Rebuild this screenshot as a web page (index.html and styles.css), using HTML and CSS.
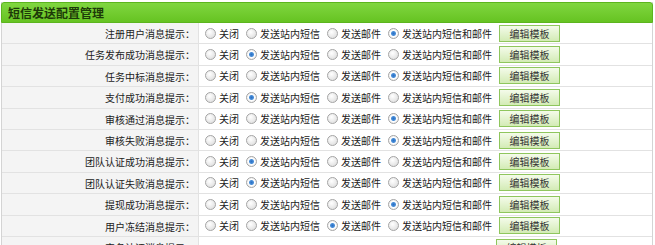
FILE: index.html
```html
<!DOCTYPE html>
<html lang="zh-CN">
  <head>
    <meta charset="UTF-8" />
    <title>短信发送配置管理</title>
    <link rel="stylesheet" href="styles.css">
  </head>
  <body>
    <div class="panel">
      <div class="panel-title">短信发送配置管理</div>

      <div class="row">
        <div class="label">注册用户消息提示：</div>
        <div class="field">
          <label class="opt"><input type="radio" name="r1"> 关闭</label>
          <label class="opt"><input type="radio" name="r1"> 发送站内短信</label>
          <label class="opt"><input type="radio" name="r1"> 发送邮件</label>
          <label class="opt"><input type="radio" name="r1" checked> 发送站内短信和邮件</label>
          <button class="edit-button">编辑模板</button>
        </div>
      </div>
      <div class="row">
        <div class="label">任务发布成功消息提示：</div>
        <div class="field">
          <label class="opt"><input type="radio" name="r2"> 关闭</label>
          <label class="opt"><input type="radio" name="r2" checked> 发送站内短信</label>
          <label class="opt"><input type="radio" name="r2"> 发送邮件</label>
          <label class="opt"><input type="radio" name="r2"> 发送站内短信和邮件</label>
          <button class="edit-button">编辑模板</button>
        </div>
      </div>
      <div class="row">
        <div class="label">任务中标消息提示：</div>
        <div class="field">
          <label class="opt"><input type="radio" name="r3"> 关闭</label>
          <label class="opt"><input type="radio" name="r3"> 发送站内短信</label>
          <label class="opt"><input type="radio" name="r3"> 发送邮件</label>
          <label class="opt"><input type="radio" name="r3" checked> 发送站内短信和邮件</label>
          <button class="edit-button">编辑模板</button>
        </div>
      </div>
      <div class="row">
        <div class="label">支付成功消息提示：</div>
        <div class="field">
          <label class="opt"><input type="radio" name="r4"> 关闭</label>
          <label class="opt"><input type="radio" name="r4" checked> 发送站内短信</label>
          <label class="opt"><input type="radio" name="r4"> 发送邮件</label>
          <label class="opt"><input type="radio" name="r4"> 发送站内短信和邮件</label>
          <button class="edit-button">编辑模板</button>
        </div>
      </div>
      <div class="row">
        <div class="label">审核通过消息提示：</div>
        <div class="field">
          <label class="opt"><input type="radio" name="r5"> 关闭</label>
          <label class="opt"><input type="radio" name="r5"> 发送站内短信</label>
          <label class="opt"><input type="radio" name="r5"> 发送邮件</label>
          <label class="opt"><input type="radio" name="r5" checked> 发送站内短信和邮件</label>
          <button class="edit-button">编辑模板</button>
        </div>
      </div>
      <div class="row">
        <div class="label">审核失败消息提示：</div>
        <div class="field">
          <label class="opt"><input type="radio" name="r6"> 关闭</label>
          <label class="opt"><input type="radio" name="r6"> 发送站内短信</label>
          <label class="opt"><input type="radio" name="r6"> 发送邮件</label>
          <label class="opt"><input type="radio" name="r6" checked> 发送站内短信和邮件</label>
          <button class="edit-button">编辑模板</button>
        </div>
      </div>
      <div class="row">
        <div class="label">团队认证成功消息提示：</div>
        <div class="field">
          <label class="opt"><input type="radio" name="r7"> 关闭</label>
          <label class="opt"><input type="radio" name="r7" checked> 发送站内短信</label>
          <label class="opt"><input type="radio" name="r7"> 发送邮件</label>
          <label class="opt"><input type="radio" name="r7"> 发送站内短信和邮件</label>
          <button class="edit-button">编辑模板</button>
        </div>
      </div>
      <div class="row">
        <div class="label">团队认证失败消息提示：</div>
        <div class="field">
          <label class="opt"><input type="radio" name="r8"> 关闭</label>
          <label class="opt"><input type="radio" name="r8" checked> 发送站内短信</label>
          <label class="opt"><input type="radio" name="r8"> 发送邮件</label>
          <label class="opt"><input type="radio" name="r8"> 发送站内短信和邮件</label>
          <button class="edit-button">编辑模板</button>
        </div>
      </div>
      <div class="row">
        <div class="label">提现成功消息提示：</div>
        <div class="field">
          <label class="opt"><input type="radio" name="r9"> 关闭</label>
          <label class="opt"><input type="radio" name="r9"> 发送站内短信</label>
          <label class="opt"><input type="radio" name="r9"> 发送邮件</label>
          <label class="opt"><input type="radio" name="r9" checked> 发送站内短信和邮件</label>
          <button class="edit-button">编辑模板</button>
        </div>
      </div>
      <div class="row">
        <div class="label">用户冻结消息提示：</div>
        <div class="field">
          <label class="opt"><input type="radio" name="r10"> 关闭</label>
          <label class="opt"><input type="radio" name="r10"> 发送站内短信</label>
          <label class="opt"><input type="radio" name="r10" checked> 发送邮件</label>
          <label class="opt"><input type="radio" name="r10"> 发送站内短信和邮件</label>
          <button class="edit-button">编辑模板</button>
        </div>
      </div>
      <div class="row">
        <div class="label">实名认证消息提示：</div>
        <div class="field field-end">
          <button class="edit-button">编辑模板</button>
        </div>
      </div>
    </div>
  </body>
</html>
```

FILE: styles.css
```css
body{
  margin: 0;
  background-color: white;
  color: #222;
  font-family: "Noto Sans CJK SC", "Noto Sans", sans-serif;
  font-size: 10px;
}
.panel{
  margin: 2px 2px 0 1px;
  border-left: 1px solid #d4d4d4;
  border-right: 1px solid #d4d4d4;
}
.panel-title{
  height: 19px;
  line-height: 19px;
  margin: 0 -1px;
  padding-left: 6px;
  background: linear-gradient(#80d640, #66c322);
  border: 1px solid #5cb51e;
  border-radius: 3px 3px 0 0;
  color: #1d3a08;
  font-size: 12px;
  font-weight: bold;
}
.row{
  display: flex;
  height: 20.4px;
  border-bottom: 1px solid #e2e2e2;
}
.label{
  width: 193px;
  padding-right: 3px;
  background-color: #f4f4f4;
  border-right: 1px solid #e2e2e2;
  text-align: right;
  line-height: 21px;
}
.field{
  flex: 1;
  display: flex;
  align-items: center;
  padding-left: 6px;
}
.field-end{
  padding-left: 297px;
}
.opt{
  display: flex;
  align-items: center;
  margin-right: 7px;
}
.opt input{
  appearance: none;
  width: 11px;
  height: 11px;
  margin: 0 3px 0 0;
  border: 1px solid #a4a4a4;
  border-radius: 50%;
  background: radial-gradient(circle at 40% 35%, #ffffff, #d8d8d8);
}
.opt input:checked{
  background: radial-gradient(circle, #2a6fc4 0, #4b8fd8 2px, #ffffff 3px, #dcdcdc 100%);
}
.edit-button{
  width: 61px;
  height: 17px;
  padding: 0;
  background: linear-gradient(#f4fbea, #d3ebb5);
  border: 1px solid #8fc65d;
  color: #333;
  font-family: inherit;
  font-size: 10px;
  cursor: pointer;
}
```
